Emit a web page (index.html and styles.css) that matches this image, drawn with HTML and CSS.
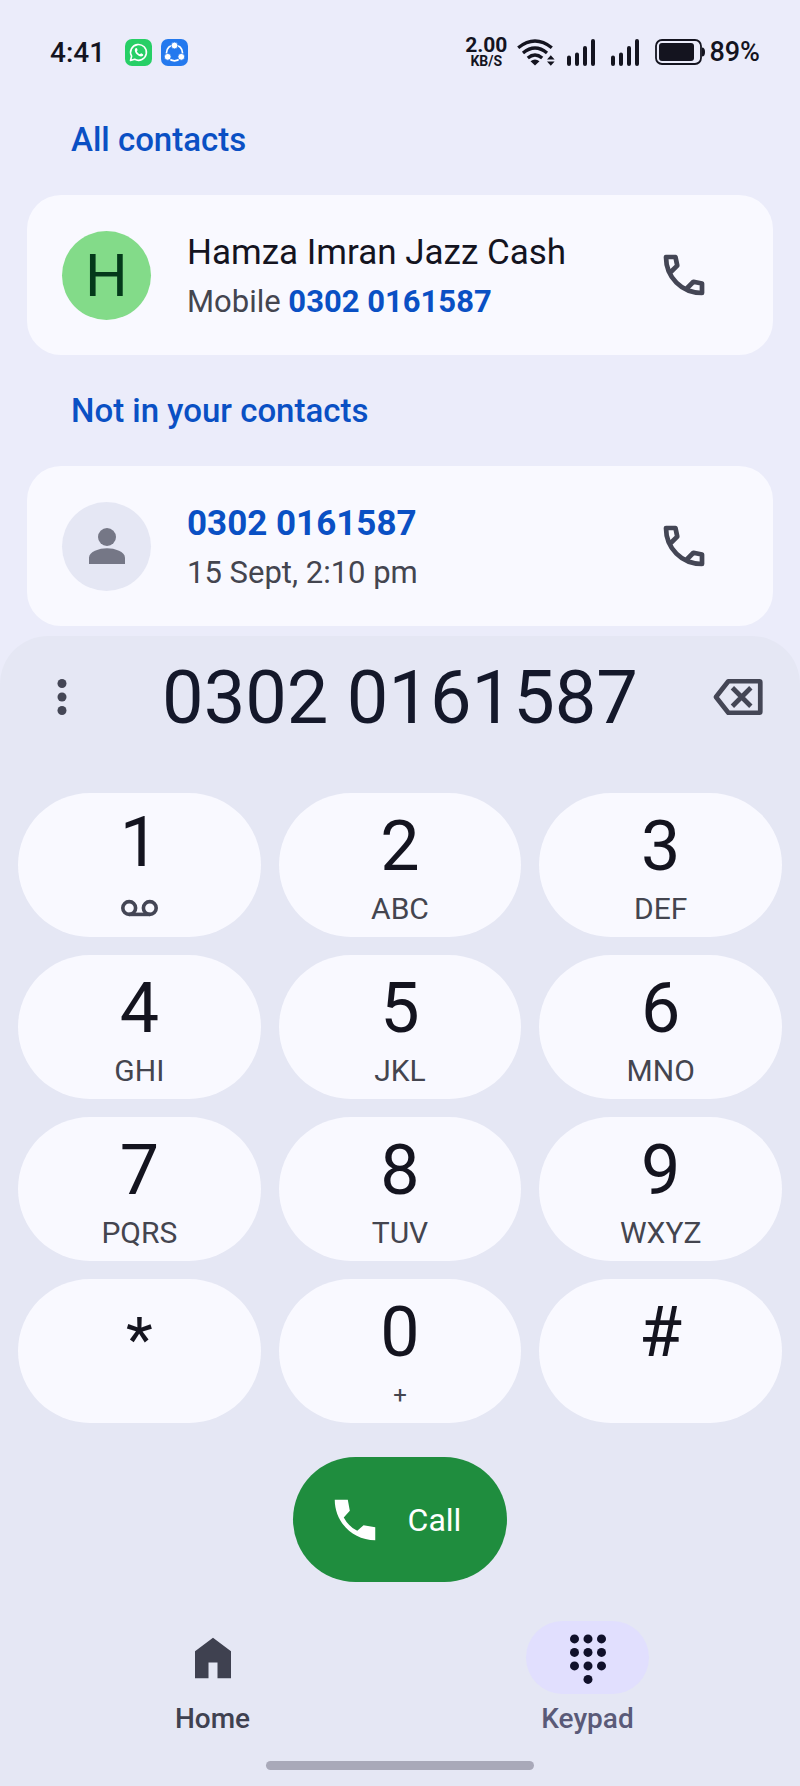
FILE: index.html
```html
<!DOCTYPE html>
<html lang="en">
<head>
  <meta charset="UTF-8">
  <meta name="viewport" content="width=device-width, initial-scale=1.0">
  <title>Phone</title>
  <link rel="stylesheet" href="styles.css">
</head>
<body>
  <!-- Shared icons -->
  <svg class="sprite" aria-hidden="true">
    <symbol id="call-outline" viewBox="0 0 24 24">
      <path d="M5.9 10.9 9 7.8 8.2 4H4C4 13 11 20 20 20V15.8L16.2 15 13.1 18.1" fill="none" stroke="currentColor" stroke-width="2.1" stroke-linejoin="round"/>
    </symbol>
    <symbol id="signal" viewBox="0 0 28 27">
      <path d="M2 18.500v6.500M10 15.500v9.500M18 9v16M26 2v23" fill="none" stroke="currentColor" stroke-width="4" stroke-linecap="round"/>
    </symbol>
  </svg>

  <header class="status">
    <span class="clock">4:41</span>
    <svg class="app-icon" viewBox="0 0 27 27" aria-label="WhatsApp">
      <rect width="27" height="27" rx="7" fill="#27cf66"/>
      <path d="M5.500 21.500 6.600 17.200A7.900 7.900 0 1 1 9.700 20.300Z" fill="none" stroke="#fff" stroke-width="1.600" stroke-linejoin="round"/>
      <path d="M10.600 9.200c.7-.5 1.200-.3 1.400.3l.6 1.500c.1.500-.7 1-.7 1.400.5 1.200 1.500 2.200 2.900 2.800.5 0 .9-1 1.400-.9l1.700.9c.6.4.2 1.400-.4 1.900-1.400 1.100-3.600.2-5.400-1.500-1.800-1.700-3.200-4.700-1.500-6.400Z" fill="#fff"/>
    </svg>
    <svg class="app-icon" viewBox="0 0 27 27" aria-label="SHAREit">
      <rect width="27" height="27" rx="7" fill="#2479ee"/>
      <circle cx="13.500" cy="13.800" r="8" fill="none" stroke="#fff" stroke-width="1.700"/>
      <g fill="#fff" stroke="#2479ee" stroke-width=".8">
        <circle cx="13.500" cy="6.500" r="3.400"/>
        <circle cx="6.700" cy="17.800" r="3.400"/>
        <circle cx="20.300" cy="17.800" r="3.400"/>
      </g>
    </svg>

    <div class="speed"><span class="rate">2.00</span><span class="unit">KB/S</span></div>
    <svg class="wifi" viewBox="0 0 38 27" aria-label="Wi-Fi">
      <g fill="none" stroke="currentColor" stroke-width="3.300">
        <path d="M1.200 8.800Q18 -4.800 34.800 8.800"/>
        <path d="M6 14Q18 4 30 14"/>
        <path d="M10.800 19Q18 13 25.200 19"/>
      </g>
      <path d="M13.500 22.200q4.500-3.600 9 0L18 26.500ZM30 20.600l3.800-4.400 3.800 4.400ZM30 22.400h7.600l-3.800 4.400Z" fill="currentColor"/>
    </svg>
    <svg class="signal"><use href="#signal"/></svg>
    <svg class="signal"><use href="#signal"/></svg>
    <svg class="battery" viewBox="0 0 50 26" aria-label="Battery">
      <rect x="1" y="1" width="45" height="24" rx="6" fill="none" stroke="currentColor" stroke-width="1.800"/>
      <rect x="4" y="4" width="35" height="18" rx="3" fill="currentColor"/>
      <path d="M47 8.500q3 0 3 4.500t-3 4.500Z" fill="currentColor"/>
    </svg>
    <span class="percent">89%</span>
  </header>

  <main>
    <section class="results">
      <h2>All contacts</h2>
      <div class="card">
        <div class="avatar avatar-green">H</div>
        <div class="info">
          <div class="name">Hamza Imran Jazz Cash</div>
          <div class="detail">Mobile <b>0302 0161587</b></div>
        </div>
        <button class="icon-btn" aria-label="Call Hamza Imran Jazz Cash">
          <svg class="icon"><use href="#call-outline"/></svg>
        </button>
      </div>

      <h2>Not in your contacts</h2>
      <div class="card">
        <div class="avatar">
          <svg class="icon" viewBox="0 0 24 24">
            <circle cx="12" cy="8" r="4" fill="currentColor"/>
            <path d="M4 20v-2.800C4 14.500 8.500 13 12 13s8 1.500 8 4.200V20Z" fill="currentColor"/>
          </svg>
        </div>
        <div class="info">
          <div class="name"><b>0302 0161587</b></div>
          <div class="detail">15 Sept, 2:10 pm</div>
        </div>
        <button class="icon-btn" aria-label="Call 0302 0161587">
          <svg class="icon"><use href="#call-outline"/></svg>
        </button>
      </div>
    </section>

    <section class="dialer">
      <div class="display">
        <button class="icon-btn" aria-label="More options">
          <svg class="icon" viewBox="0 0 24 24">
            <g fill="currentColor"><circle cx="12" cy="6" r="2"/><circle cx="12" cy="12" r="2"/><circle cx="12" cy="18" r="2"/></g>
          </svg>
        </button>
        <input class="number" type="tel" value="0302 0161587" aria-label="Phone number">
        <button class="icon-btn" aria-label="Backspace">
          <svg class="icon" viewBox="0 0 24 24">
            <path d="M7.700 5H21.500Q21.900 5 21.900 5.400V18.600Q21.900 19 21.500 19H7.700L2.200 12Z" fill="none" stroke="currentColor" stroke-width="2.100" stroke-linejoin="round"/>
            <path d="M9.500 7.900 17.700 16.100M17.700 7.900 9.500 16.100" stroke="currentColor" stroke-width="2.100"/>
          </svg>
        </button>
      </div>

      <div class="keypad">
        <button class="key voicemail"><span class="digit">1</span>
          <svg viewBox="0 0 37 40" aria-label="Voicemail">
            <g fill="none" stroke="currentColor" stroke-width="3.600"><circle cx="8.200" cy="19" r="6.400"/><circle cx="28.800" cy="19" r="6.400"/><path d="M8.200 25.400H28.800"/></g>
          </svg>
        </button>
        <button class="key"><span class="digit">2</span><span class="letters">ABC</span></button>
        <button class="key"><span class="digit">3</span><span class="letters">DEF</span></button>
        <button class="key"><span class="digit">4</span><span class="letters">GHI</span></button>
        <button class="key"><span class="digit">5</span><span class="letters">JKL</span></button>
        <button class="key"><span class="digit">6</span><span class="letters">MNO</span></button>
        <button class="key"><span class="digit">7</span><span class="letters">PQRS</span></button>
        <button class="key"><span class="digit">8</span><span class="letters">TUV</span></button>
        <button class="key"><span class="digit">9</span><span class="letters">WXYZ</span></button>
        <button class="key"><span class="digit star">*</span></button>
        <button class="key"><span class="digit">0</span><span class="letters plus">+</span></button>
        <button class="key"><span class="digit">#</span></button>
      </div>

      <button class="call">
        <svg class="icon" viewBox="0 0 24 24">
          <path d="M3 3H8.800L9.700 7.900 7 10.900Q9 14.800 13 16.800L15.800 14.300 21 15.200V21C11 21 3 13 3 3Z" fill="currentColor"/>
        </svg>
        Call
      </button>

      <nav class="tabs">
        <a class="tab" href="#">
          <span class="pill">
            <svg class="icon" viewBox="0 0 24 24"><path d="M4 21V9L12 3 20 9V21H14V14H10V21Z" fill="currentColor"/></svg>
          </span>
          Home
        </a>
        <a class="tab active" href="#" aria-current="page">
          <span class="pill">
            <svg class="icon" viewBox="0 0 24 24">
              <g fill="currentColor">
                <circle cx="6" cy="3.500" r="2"/><circle cx="12" cy="3.500" r="2"/><circle cx="18" cy="3.500" r="2"/>
                <circle cx="6" cy="9.500" r="2"/><circle cx="12" cy="9.500" r="2"/><circle cx="18" cy="9.500" r="2"/>
                <circle cx="6" cy="15.500" r="2"/><circle cx="12" cy="15.500" r="2"/><circle cx="18" cy="15.500" r="2"/>
                <circle cx="12" cy="21.500" r="2"/>
              </g>
            </svg>
          </span>
          Keypad
        </a>
      </nav>
      <div class="home-bar"></div>
    </section>
  </main>
</body>
</html>
```
FILE: styles.css
```css
* {
  box-sizing: border-box;
}
body {
  margin: 0;
  background: #ebecfa;
  color: #14141f;
  font-family: Roboto, "Liberation Sans", sans-serif;
}
button {
  border: none;
  padding: 0;
  background: none;
  color: inherit;
  font: inherit;
  cursor: pointer;
}
svg {
  display: block;
  flex: none;
}
.sprite {
  display: none;
}
.icon {
  width: 54px;
  height: 54px;
}
b {
  color: #0a50c4;
  font-weight: 700;
}

/* Status bar */
.status {
  display: flex;
  align-items: center;
  height: 84px;
  padding: 20px 40px 0 50px;
  font-weight: 500;
}
.clock {
  margin-right: 20px;
  font-size: 28px;
}
.app-icon {
  width: 27px;
  height: 27px;
  margin-right: 9px;
}
.speed {
  display: flex;
  flex-direction: column;
  align-items: center;
  margin-left: auto;
  margin-right: 10px;
}
.rate {
  font-size: 21px;
  line-height: 17px;
  font-weight: 700;
}
.unit {
  font-size: 14px;
  line-height: 14px;
  font-weight: 700;
}
.wifi {
  width: 38px;
  height: 27px;
  margin-right: 12px;
}
.signal {
  width: 28px;
  height: 27px;
  margin-right: 16px;
}
.battery {
  width: 50px;
  height: 26px;
  margin-right: 4px;
}
.percent {
  font-size: 27px;
}

/* Search results */
.results {
  padding: 0 27px 10px;
}
h2 {
  margin: 36px 44px 35px;
  color: #0a50c4;
  font-size: 33px;
  line-height: 40px;
  font-weight: 500;
}
.card {
  display: flex;
  align-items: center;
  height: 160px;
  padding: 0 62px 0 35px;
  border-radius: 34px;
  background: #f9f9ff;
}
.avatar {
  display: flex;
  align-items: center;
  justify-content: center;
  width: 89px;
  height: 89px;
  margin-right: 36px;
  border-radius: 50%;
  background: #e5e7f4;
  color: #757786;
  font-size: 60px;
}
.avatar-green {
  background: #83db89;
  color: #04391a;
}
.info {
  flex: 1;
  padding-top: 4px;
}
.name {
  font-size: 35px;
  line-height: 49px;
}
.detail {
  color: #44454f;
  font-size: 31px;
  line-height: 49px;
}
.icon-btn {
  color: #444655;
}

/* Dialer */
.dialer {
  padding: 0 18px 16px;
  border-radius: 48px 48px 0 0;
  background: #e5e7f4;
}
.display {
  display: flex;
  align-items: center;
  height: 122px;
  padding: 0 17px;
  margin-bottom: 35px;
}
.number {
  flex: 1;
  min-width: 0;
  padding: 0;
  border: none;
  outline: none;
  background: none;
  color: #14182a;
  font: 400 74px Roboto, "Liberation Sans", sans-serif;
  text-align: center;
}
.keypad {
  display: grid;
  grid-template-columns: repeat(3, 1fr);
  gap: 18px;
}
.key {
  display: flex;
  flex-direction: column;
  align-items: center;
  gap: 8px;
  height: 144px;
  padding-top: 18px;
  border-radius: 72px;
  background: #f9f9ff;
}
.voicemail {
  gap: 12px;
  padding-top: 14px;
}
.voicemail svg {
  width: 37px;
  height: 40px;
  color: #444655;
}
.digit {
  font-size: 70px;
  line-height: 70px;
}
.star {
  font-size: 62px;
  line-height: 86px;
}
.letters {
  color: #44454f;
  font-size: 30px;
  line-height: 40px;
}
.plus {
  font-size: 24px;
}
.call {
  display: flex;
  align-items: center;
  gap: 26px;
  height: 125px;
  margin: 34px auto 39px;
  padding: 0 46px 0 35px;
  border-radius: 63px;
  background: #1f8d3e;
  color: #fff;
  font-size: 32px;
}

/* Bottom navigation */
.tabs {
  display: flex;
  padding: 0 7px;
  margin-bottom: 24px;
}
.tab {
  display: flex;
  flex: 1;
  flex-direction: column;
  align-items: center;
  gap: 7px;
  color: #3f4150;
  font-size: 28px;
  line-height: 36px;
  font-weight: 500;
  text-decoration: none;
}
.pill {
  display: flex;
  align-items: center;
  justify-content: center;
  width: 123px;
  height: 73px;
  border-radius: 37px;
}
.active {
  color: #5a5a78;
}
.active .pill {
  background: #e1dffe;
  color: #10102a;
}
.home-bar {
  width: 35%;
  height: 9px;
  margin: 0 auto;
  border-radius: 5px;
  background: #a9a9b9;
}
```
